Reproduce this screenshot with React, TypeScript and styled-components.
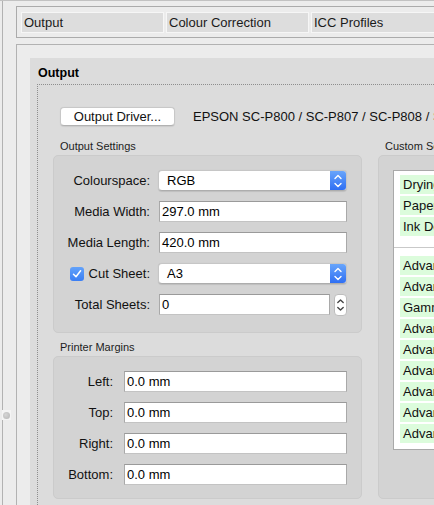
import React from 'react';
import styled, { createGlobalStyle } from 'styled-components';

const GlobalStyle = createGlobalStyle`
  html, body {
    margin: 0;
    padding: 0;
    background: #ececec;
  }
  body {
    font-family: "Liberation Sans", Arial, sans-serif;
    font-size: 13px;
    color: #000;
  }
`;

const Window = styled.div`
  position: relative;
  width: 434px;
  height: 505px;
  overflow: hidden;
  box-sizing: border-box;
  background: #ececec;
  border-top: 1px solid #c2c2c2;
  padding-left: 2px;
`;

const Pane = styled.div`
  height: 100%;
  box-sizing: border-box;
  border-left: 1px solid #b2b2b2;
  padding: 5px 0 0 13px;
`;

const SplitHandle = styled.div`
  position: absolute;
  left: 2px;
  top: 409px;
  width: 9px;
  height: 10px;
  background: #f4f4f4;
  display: flex;
  align-items: center;
  justify-content: center;

  &::after {
    content: '';
    width: 7px;
    height: 7px;
    border-radius: 50%;
    background: radial-gradient(circle at 40% 40%, #d6d6d6, #b4b4b4);
  }
`;

const TabStrip = styled.div`
  display: flex;
  gap: 2px;
  width: 640px;
  box-sizing: border-box;
  border-top: 1px solid #ababab;
  border-bottom: 1px solid #ababab;
  border-left: 1px solid #ababab;
  padding: 5px 0 4px 4px;
`;

const TabCell = styled.div`
  width: 143px;
  height: 21px;
  box-sizing: border-box;
  background: #dddddd;
  border: 1px solid #f6f6f6;
  padding-left: 2px;
  line-height: 19px;
  color: #1a1a1a;
  white-space: nowrap;
`;

const Content = styled.div`
  margin-top: 6px;
  width: 640px;
  height: 600px;
  box-sizing: border-box;
  border-top: 1px solid #b2b2b2;
  border-left: 1px solid #b2b2b2;
  padding: 13px 0 0 13px;
`;

const Group = styled.section`
  height: 100%;
  background: #dcdcdc;
  padding-left: 7px;
`;

const GroupTitle = styled.h3`
  margin: 0;
  padding: 4px 0 0 1px;
  line-height: 22px;
  font-size: 12.5px;
  font-weight: bold;
`;

const Dotted = styled.div`
  height: 100%;
  border-top: 1px dotted #8e8e8e;
  border-left: 1px dotted #8e8e8e;
  padding: 22px 0 0 15px;
`;

const DriverRow = styled.div`
  display: flex;
  align-items: center;
  margin-left: 7px;
  height: 19px;
`;

const PushButton = styled.button`
  width: 115px;
  height: 19px;
  box-sizing: border-box;
  padding: 0;
  background: #fff;
  border: 1px solid #c8c8c8;
  border-bottom-color: #b2b2b2;
  border-radius: 4px;
  box-shadow: 0 0.5px 1px rgba(0, 0, 0, 0.08);
  font-family: inherit;
  font-size: 13px;
  color: #111;
`;

const DriverName = styled.span`
  margin-left: 18px;
  white-space: nowrap;
  color: #111;
`;

const Columns = styled.div`
  display: flex;
  gap: 16px;
  margin-top: 13px;
`;

const Column = styled.div<{ $width: number }>`
  width: ${({ $width }) => $width}px;
  flex: none;
`;

const BoxLabel = styled.div<{ $spaced?: boolean }>`
  margin-top: ${({ $spaced }) => ($spaced ? 7 : 0)}px;
  padding-left: 7px;
  line-height: 14px;
  font-size: 11px;
  color: #1c1c1c;
  white-space: nowrap;
`;

const Box = styled.div<{ $height?: number; $bottom?: number }>`
  margin-top: 2px;
  box-sizing: border-box;
  ${({ $height }) => ($height ? `height: ${$height}px;` : '')}
  background: #d3d3d3;
  border: 1px solid #cbcbcb;
  border-radius: 5px;
  padding: 9px 0 ${({ $bottom }) => $bottom ?? 8}px;
`;

const FieldGrid = styled.div<{ $label: number; $gap: number }>`
  display: grid;
  grid-template-columns: ${({ $label }) => $label}px 1fr;
  grid-auto-rows: 31px;
  column-gap: ${({ $gap }) => $gap}px;
  align-items: center;
  padding-right: 14px;
`;

const Label = styled.label`
  display: flex;
  align-items: center;
  justify-content: flex-end;
  gap: 4px;
  white-space: nowrap;
  color: #111;
`;

const TextField = styled.div`
  height: 21px;
  box-sizing: border-box;
  background: #fff;
  border: 1px solid #a9a9a9;
  border-top-color: #9a9a9a;
  border-bottom-color: #c3c3c3;
  padding-left: 2px;
  line-height: 19px;
  white-space: nowrap;
`;

const SelectBox = styled.div`
  display: flex;
  height: 21px;
  box-sizing: border-box;
  margin-left: -1px;
  background: #fff;
  border: 1px solid #c6c6c6;
  border-bottom-color: #adadad;
  border-radius: 4px;
  box-shadow: 0 0.5px 1px rgba(0, 0, 0, 0.1);
  overflow: hidden;
`;

const SelectText = styled.span`
  flex: 1;
  padding-left: 8px;
  line-height: 19px;
`;

const SelectArrows = styled.span`
  width: 16px;
  display: flex;
  align-items: center;
  justify-content: center;
  background: linear-gradient(#68a5fb, #2f6ff3);
`;

const StepperRow = styled.div`
  display: flex;
  align-items: center;
  gap: 4px;
`;

const Stepper = styled.span`
  width: 13px;
  height: 22px;
  box-sizing: border-box;
  flex: none;
  background: #fff;
  border: 1px solid #bdbdbd;
  border-radius: 4px;
  display: flex;
  align-items: center;
  justify-content: center;
`;

const Check = styled.span`
  width: 14px;
  height: 14px;
  margin-right: 1px;
  border-radius: 3px;
  background: linear-gradient(#63a2fa, #3a7ef4);
  display: flex;
  align-items: center;
  justify-content: center;
`;

const SettingsBox = styled(Box)`
  width: 300px;
  padding: 14px 0 0 14px;
`;

const SettingsList = styled.div`
  width: 260px;
  height: 280px;
  box-sizing: border-box;
  background: #fff;
  border: 1px solid #a9a9a9;
  padding: 4px 0 0 6px;
  display: flex;
  flex-direction: column;
  gap: 2px;
`;

const SettingRow = styled.div`
  height: 19px;
  background: #dcfcdc;
  padding-left: 3px;
  line-height: 19px;
  white-space: nowrap;
  color: #111;
`;

const ListDivider = styled.div`
  height: 1px;
  margin: 9px 0 6px -6px;
  background: #c9c9c9;
`;

const Chevrons = ({ colour, small }: { colour: string; small?: boolean }) => {
  const w = small ? 9 : 10;
  return (
    <svg width={w} height="16" viewBox={`0 0 ${w} 16`} fill="none">
      <path
        d={small ? 'M1.8 5.5 L4.5 3 L7.2 5.5' : 'M2 5.5 L5 2.5 L8 5.5'}
        stroke={colour}
        strokeWidth="1.4"
        strokeLinecap="round"
        strokeLinejoin="round"
      />
      <path
        d={small ? 'M1.8 10.5 L4.5 13 L7.2 10.5' : 'M2 10.5 L5 13.5 L8 10.5'}
        stroke={colour}
        strokeWidth="1.4"
        strokeLinecap="round"
        strokeLinejoin="round"
      />
    </svg>
  );
};

const Popup = ({ value }: { value: string }) => (
  <SelectBox>
    <SelectText>{value}</SelectText>
    <SelectArrows>
      <Chevrons colour="#fff" />
    </SelectArrows>
  </SelectBox>
);

const tabs = ['Output', 'Colour Correction', 'ICC Profiles'];

const margins = ['Left', 'Top', 'Right', 'Bottom'];

const mediaSettings = ['Drying Time', 'Paper Thickness', 'Ink Density'];

const advancedSettings = [
  'Advanced Black Density',
  'Advanced Colour Density',
  'Gamma',
  'Advanced Cyan Limit',
  'Advanced Magenta Limit',
  'Advanced Yellow Limit',
  'Advanced Light Cyan Limit',
  'Advanced Light Magenta Limit',
  'Advanced Grey Limit',
];

export default function App() {
  return (
    <>
      <GlobalStyle />
      <Window>
        <SplitHandle />
        <Pane>
          <TabStrip>
            {tabs.map((t) => (
              <TabCell key={t}>{t}</TabCell>
            ))}
          </TabStrip>

          <Content>
            <Group>
              <GroupTitle>Output</GroupTitle>
              <Dotted>
                <DriverRow>
                  <PushButton>Output Driver...</PushButton>
                  <DriverName>EPSON SC-P800 / SC-P807 / SC-P808 / SC-P809 Series</DriverName>
                </DriverRow>

                <Columns>
                  <Column $width={309}>
                    <BoxLabel>Output Settings</BoxLabel>
                    <Box $bottom={12}>
                      <FieldGrid $label={96} $gap={9}>
                        <Label>Colourspace:</Label>
                        <Popup value="RGB" />

                        <Label>Media Width:</Label>
                        <TextField>297.0 mm</TextField>

                        <Label>Media Length:</Label>
                        <TextField>420.0 mm</TextField>

                        <Label>
                          <Check>
                            <svg width="10" height="10" viewBox="0 0 10 10" fill="none">
                              <path
                                d="M1.5 5.2 L4 7.8 L8.6 1.8"
                                stroke="#fff"
                                strokeWidth="1.5"
                                strokeLinecap="round"
                                strokeLinejoin="round"
                              />
                            </svg>
                          </Check>
                          Cut Sheet:
                        </Label>
                        <Popup value="A3" />

                        <Label>Total Sheets:</Label>
                        <StepperRow>
                          <TextField style={{ flex: 1 }}>0</TextField>
                          <Stepper>
                            <Chevrons colour="#444" small />
                          </Stepper>
                        </StepperRow>
                      </FieldGrid>
                    </Box>

                    <BoxLabel $spaced>Printer Margins</BoxLabel>
                    <Box>
                      <FieldGrid $label={59} $gap={11}>
                        {margins.map((m) => (
                          <React.Fragment key={m}>
                            <Label>{m}:</Label>
                            <TextField>0.0 mm</TextField>
                          </React.Fragment>
                        ))}
                      </FieldGrid>
                    </Box>
                  </Column>

                  <Column $width={300}>
                    <BoxLabel>Custom Settings</BoxLabel>
                    <SettingsBox $height={344}>
                      <SettingsList>
                        {mediaSettings.map((s) => (
                          <SettingRow key={s}>{s}</SettingRow>
                        ))}
                        <ListDivider />
                        {advancedSettings.map((s) => (
                          <SettingRow key={s}>{s}</SettingRow>
                        ))}
                      </SettingsList>
                    </SettingsBox>
                  </Column>
                </Columns>
              </Dotted>
            </Group>
          </Content>
        </Pane>
      </Window>
    </>
  );
}
